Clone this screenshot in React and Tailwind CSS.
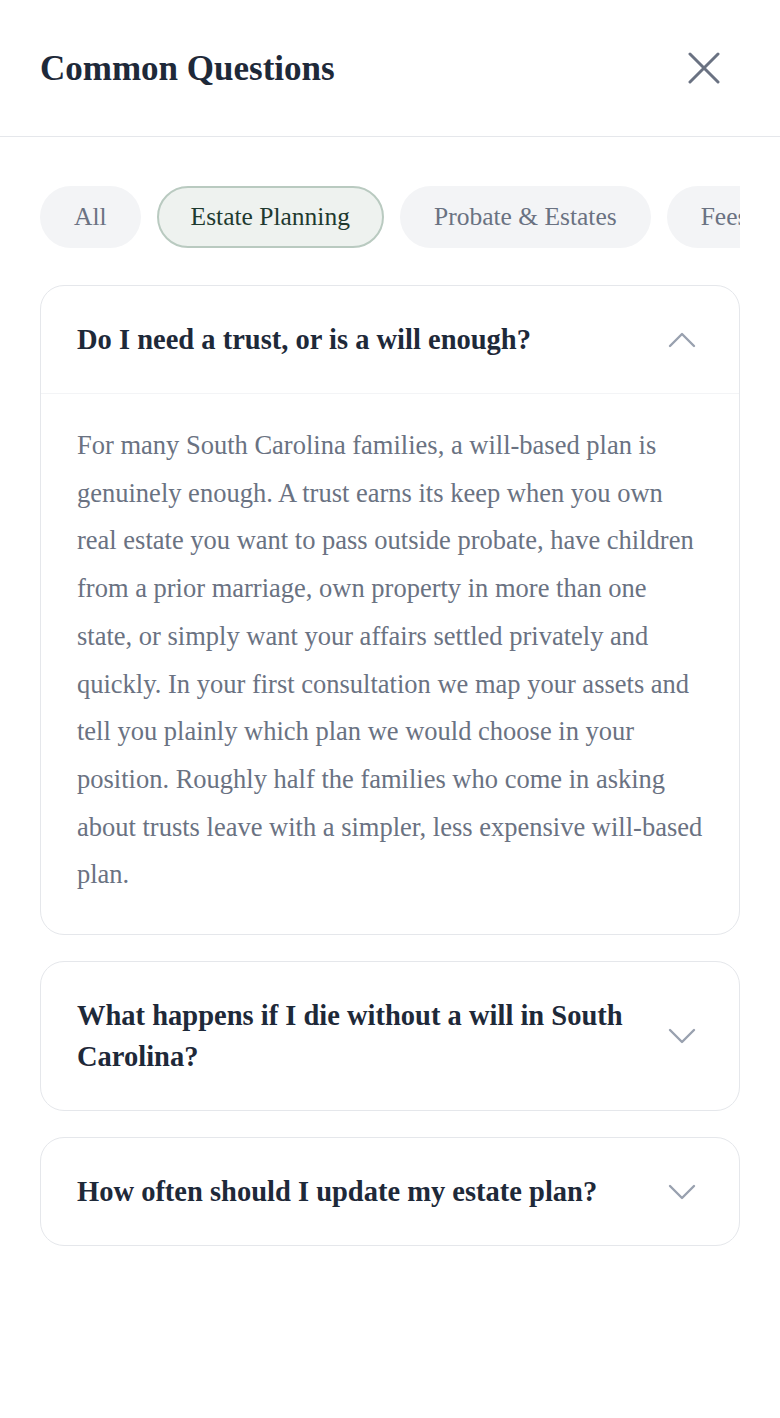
import React, { useState } from 'react';

const tabs = ['All', 'Estate Planning', 'Probate & Estates', 'Fees & Process'];

const faqs = [
  {
    q: 'Do I need a trust, or is a will enough?',
    a: 'For many South Carolina families, a will-based plan is genuinely enough. A trust earns its keep when you own real estate you want to pass outside probate, have children from a prior marriage, own property in more than one state, or simply want your affairs settled privately and quickly. In your first consultation we map your assets and tell you plainly which plan we would choose in your position. Roughly half the families who come in asking about trusts leave with a simpler, less expensive will-based plan.',
  },
  { q: 'What happens if I die without a will in South Carolina?', a: '' },
  { q: 'How often should I update my estate plan?', a: '' },
];

function Chevron({ up }) {
  return (
    <svg width="48" height="48" viewBox="0 0 24 24" fill="none" stroke="currentColor" strokeWidth="1.2" strokeLinecap="round" strokeLinejoin="round" className="-my-[8px] shrink-0 text-gray-400">
      {up ? <path d="M6 15l6-6 6 6" /> : <path d="M6 9l6 6 6-6" />}
    </svg>
  );
}

export default function App() {
  const [active, setActive] = useState('Estate Planning');
  const [open, setOpen] = useState(0);

  return (
    <div className="min-h-screen bg-white" style={{ fontFamily: '"Liberation Serif", "Times New Roman", serif' }}>
      <div className="flex h-[137px] items-center justify-between border-b border-gray-200 pl-10 pr-[60px]">
        <h2 className="mt-[2px] text-[35px] font-bold text-gray-800">Common Questions</h2>
        <button className="text-gray-500">
          <svg width="32" height="32" viewBox="0 0 32 32" fill="none" stroke="currentColor" strokeWidth="3" strokeLinecap="round">
            <path d="M2 2L30 30M30 2L2 30" />
          </svg>
        </button>
      </div>

      <div className="px-10 pt-[49px]">
        <div className="flex gap-4 overflow-hidden">
          {tabs.map((t) => (
            <button
              key={t}
              onClick={() => setActive(t)}
              className={
                t === active
                  ? 'h-[62px] shrink-0 whitespace-nowrap rounded-full border-2 border-[#b9cac0] bg-[#eef2ef] px-[32px] text-[25.5px] text-[#1e3a2f]'
                  : 'h-[62px] shrink-0 whitespace-nowrap rounded-full border-2 border-transparent bg-gray-100 px-[32px] text-[25.5px] text-gray-500'
              }
            >
              {t}
            </button>
          ))}
        </div>

        <div className="mt-[37px] flex flex-col gap-[26px]">
          {faqs.map((f, i) => (
            <div key={i} className="rounded-3xl border border-gray-200 bg-white">
              <button
                onClick={() => setOpen(open === i ? -1 : i)}
                className={'flex w-full items-center justify-between gap-4 py-[33px] pl-9 pr-[33px] text-left' + (open === i ? ' border-b border-gray-100' : '')}
              >
                <span className="text-[28.5px] font-bold leading-[41px] text-gray-800">{f.q}</span>
                <Chevron up={open === i} />
              </button>
              {open === i && (
                <div className="px-9 pt-7 pb-[35px] text-[26.5px] leading-[47.7px] text-gray-500">{f.a}</div>
              )}
            </div>
          ))}
        </div>
      </div>
    </div>
  );
}
